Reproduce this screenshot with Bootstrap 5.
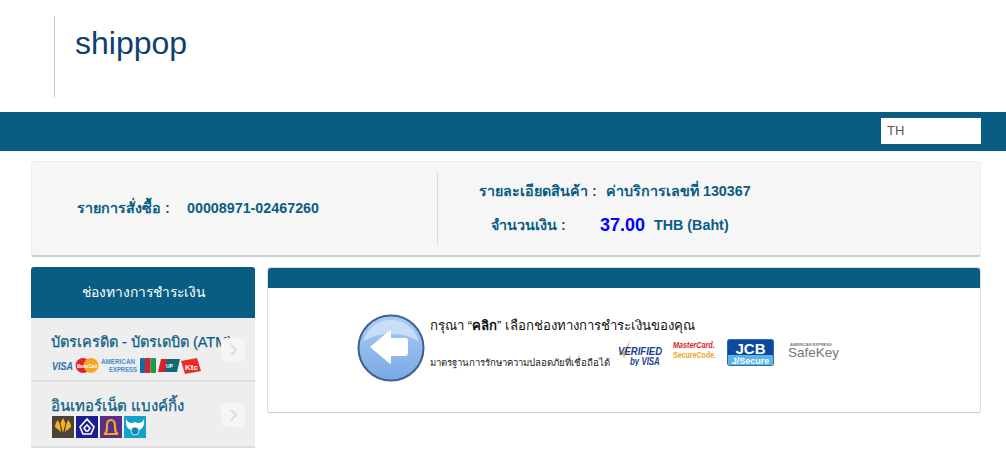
<!DOCTYPE html>
<html lang="en">
<head>
    <meta charset="UTF-8">
    <meta name="viewport" content="width=device-width, initial-scale=1.0">
    <title>shippop</title>
    <link href="https://cdn.jsdelivr.net/npm/bootstrap@5.3.0/dist/css/bootstrap.min.css" rel="stylesheet">
    <style>
        body { font-family: "Liberation Sans", Arial, sans-serif; color: #222; background: #fff; overflow: hidden; }
        .site-head { height: 112px; padding: 16px 0 0 54px; }
        .site-title { height: 81px; border-left: 1px solid #ccc; padding-left: 20px; font-size: 32px; line-height: 54px; color: #0e3f6e; margin: 0; font-weight: 400; }
        .lang-bar { height: 39px; background: #095d83; padding: 6px 25px 0 0; }
        .lang-pick { width: 100px; height: 26px; border: 0; border-radius: 0; padding: 0 6px; font-size: 13px; color: #555; background: #fff; box-shadow: none; }
        .page-wrap { padding: 10px 25px 0 31px; }
        .order-box { height: 96px; background: #f6f6f6; border: 1px solid #eee; border-bottom: 2px solid #ccc; border-radius: 3px; padding: 10px 0; margin-bottom: 10px; color: #095d83; font-weight: 700; font-size: 14.3px; }
        .order-left { width: 406px; padding-left: 45px; height: 74px; border-right: 1px solid #ddd; }
        .order-right { padding: 2px 0 0 41px; height: 74px; gap: 9px; }
        .order-label-a { width: 110px; }
        .order-label-b { width: 127px; }
        .order-label-c { width: 121px; padding-left: 12px; }
        .order-amount { color: #00f; font-size: 18px; width: 54px; }
        .pay-side { width: 224px; }
        .pay-head { height: 51px; background: #095d83; color: #fff; border-radius: 3px 3px 0 0; font-size: 13.8px; padding-top: 2px; }
        .pay-item { background: #eee; border-bottom: 2px solid #ddd; padding: 0 10px 0 20px; color: #095d83; position: relative; }
        .pay-item-a { height: 64px; padding-top: 15px; }
        .pay-item-b { height: 66px; padding-top: 14px; }
        .pay-name { font-size: 15px; line-height: 19px; white-space: nowrap; -webkit-text-stroke: .25px #095d83; }
        .pay-item-a .pay-name { font-size: 14.5px; }
        .pay-chevron { position: absolute; right: 10px; top: 20px; width: 24px; height: 24px; border-radius: 5px; background: #f5f5f5; }
        .pay-item-b .pay-chevron { top: 21px; }
        .pay-logos { display: flex; align-items: center; gap: 2px; }
        .pay-item-a .pay-logos { margin-top: 5px; }
        .pay-item-b .pay-logos { margin: 1px 0 0 1px; }
        .bank-logo { display: block; width: 22px; height: 22px; }
        .pay-main { width: 714px; height: 146px; margin-left: 12px; border: 1px solid #ddd; border-bottom-color: #ccc; border-radius: 3px; }
        .pay-main-top { height: 20px; background: #095d83; border-radius: 3px 3px 0 0; }
        .hint-row { padding: 26px 0 0 89px; }
        .hint-text { margin-left: 5px; width: 186px; }
        .hint-line { font-size: 13.2px; line-height: 18px; margin-top: 3px; color: #111; white-space: nowrap; }
        .hint-small { font-size: 9.6px; margin-top: 21px; color: #222; white-space: nowrap; }
        .hint-logos { margin: 25px 0 0 0; gap: 10px; }
        .logo-svg { display: block; }
    </style>
</head>
<body>
    <div class="site-head">
        <h1 class="site-title">shippop</h1>
    </div>
    <div class="lang-bar d-flex justify-content-end">
        <select class="form-select lang-pick"><option>TH</option></select>
    </div>
    <div class="page-wrap">
        <div class="order-box d-flex">
            <div class="order-left d-flex align-items-center">
                <div class="order-label-a">รายการสั่งซื้อ :</div>
                <div>00008971-02467260</div>
            </div>
            <div class="order-right d-flex flex-column justify-content-center">
                <div class="d-flex">
                    <div class="order-label-b">รายละเอียดสินค้า :</div>
                    <div>ค่าบริการเลขที่ 130367</div>
                </div>
                <div class="d-flex align-items-center">
                    <div class="order-label-c">จำนวนเงิน :</div>
                    <div class="order-amount">37.00</div>
                    <div>THB (Baht)</div>
                </div>
            </div>
        </div>
        <div class="d-flex align-items-start">
            <div class="pay-side">
                <div class="pay-head d-flex align-items-center justify-content-center">ช่องทางการชำระเงิน</div>
                <div class="pay-item pay-item-a">
                    <div class="pay-name">บัตรเครดิต - บัตรเดบิต (ATM)</div>
                    <div class="pay-logos">
                        <svg class="logo-svg" width="152" height="17" viewBox="0 0 152 17">
                            <text x="1" y="12.500" font-family="Liberation Sans" font-size="11" font-weight="700" font-style="italic" fill="#2a6ca5" textLength="21" lengthAdjust="spacingAndGlyphs">VISA</text>
                            <circle cx="32" cy="8.500" r="7.500" fill="#e0262c"/><circle cx="40" cy="8.500" r="7.500" fill="#f5a623"/>
                            <text x="26" y="10.500" font-family="Liberation Sans" font-size="4.500" font-weight="700" fill="#fff" textLength="20" lengthAdjust="spacingAndGlyphs">MasterCard</text>
                            <text x="50" y="7" font-family="Liberation Sans" font-size="7" font-weight="700" fill="#3f8fd0" textLength="34" lengthAdjust="spacingAndGlyphs">AMERICAN</text>
                            <text x="58" y="15" font-family="Liberation Sans" font-size="7" font-weight="700" fill="#3f8fd0" textLength="28" lengthAdjust="spacingAndGlyphs">EXPRESS</text>
                            <rect x="89" y="1" width="5" height="15" rx="1" fill="#0b6cb0"/><rect x="94" y="1" width="5.500" height="15" fill="#d8232a"/><rect x="99.500" y="1" width="5.500" height="15" rx="1" fill="#1a9a4a"/>
                            <path d="M110 2h8l-3 13h-8z" fill="#d1232b"/><path d="M116 2h13l-3 13h-12z" fill="#0c6b76"/>
                            <text x="115" y="11" font-family="Liberation Sans" font-size="5" font-weight="700" fill="#fff">UP</text>
                            <path d="M130 4l16-3 4 13-16 3z" fill="#ee2a24"/>
                            <text x="134" y="13" font-family="Liberation Sans" font-size="8" font-weight="700" fill="#fff">Ktc</text>
                        </svg>
                    </div>
                    <svg class="pay-chevron" viewBox="0 0 24 24"><path d="M10 7l5 5-5 5" fill="none" stroke="#ddd" stroke-width="2"/></svg>
                </div>
                <div class="pay-item pay-item-b">
                    <div class="pay-name">อินเทอร์เน็ต แบงค์กิ้ง</div>
                    <div class="pay-logos">
                        <svg class="bank-logo" viewBox="0 0 22 22"><rect width="22" height="22" fill="#4a433c"/><path d="M11 2l2.500 5L11 17 8.500 7zM6 4l2 5 1 7-6-5c0-3 1-5 3-7zM16 4l-2 5-1 7 6-5c0-3-1-5-3-7z" fill="#f5b31c"/></svg>
                        <svg class="bank-logo" viewBox="0 0 22 22"><rect width="22" height="22" fill="#1e1e93"/><path d="M11 3l7 8-3 7H7l-3-7zM11 9l-3 3 2 3h2l2-3z" fill="none" stroke="#fff" stroke-width="1.600"/></svg>
                        <svg class="bank-logo" viewBox="0 0 22 22"><rect width="22" height="22" fill="#58308c"/><path d="M4 18c3-1 3-4 3-8s1-6 4-6 4 2 4 6 0 7 3 8z" fill="none" stroke="#f2a81d" stroke-width="2.200"/></svg>
                        <svg class="bank-logo" viewBox="0 0 22 22"><rect width="22" height="22" fill="#12a3c8"/><path d="M2 3c2 4 5 5 9 3 4 2 7 1 9-3 1 7-2 10-5 11l-4-2-4 2C4 13 1 10 2 3z" fill="#fff"/><circle cx="11" cy="15" r="4" fill="#1c84a8" stroke="#bfe6f2"/></svg>
                    </div>
                    <svg class="pay-chevron" viewBox="0 0 24 24"><path d="M10 7l5 5-5 5" fill="none" stroke="#ddd" stroke-width="2"/></svg>
                </div>
            </div>
            <div class="pay-main">
                <div class="pay-main-top"></div>
                <div class="hint-row d-flex">
                    <svg class="logo-svg" width="68" height="68" viewBox="0 0 68 68">
                        <defs>
                            <linearGradient id="ballFill" x1="0" y1="0" x2="0" y2="1"><stop offset="0" stop-color="#a8cdf3"/><stop offset="1" stop-color="#7aa9e6"/></linearGradient>
                        </defs>
                        <circle cx="34" cy="34" r="32.500" fill="url(#ballFill)" stroke="#3f5f8f" stroke-width="2"/>
                        <path d="M6 28C10 13 22 6 34 6s24 7 28 22C48 17 20 17 6 28z" fill="#d8e8fa" opacity=".7"/>
                        <path d="M13 33l19-16c1-1 2-1 2 1v6h14c2 0 3 1 3 3v12c0 2-1 3-3 3H34v6c0 2-1 2-2 1z" fill="#fff"/>
                    </svg>
                    <div class="hint-text">
                        <div class="hint-line">กรุณา “<b>คลิก</b>” เลือกช่องทางการชำระเงินของคุณ</div>
                        <div class="hint-small">มาตรฐานการรักษาความปลอดภัยที่เชื่อถือได้</div>
                    </div>
                    <div class="hint-logos d-flex align-items-start">
                        <svg class="logo-svg" width="47" height="27" viewBox="0 0 47 27">
                            <path d="M3 6l4 8 8-14-7 19z" fill="#f0a820"/>
                            <text transform="translate(2 16) scale(.87 1)" font-family="Liberation Sans" font-size="11" font-weight="700" font-style="italic" fill="#1a3f8c">VERIFIED</text>
                            <text transform="translate(14 26) scale(.79 1)" font-family="Liberation Sans" font-size="10" font-weight="700" font-style="italic" fill="#1a3f8c">by VISA</text>
                        </svg>
                        <svg class="logo-svg" width="44" height="22" viewBox="0 0 44 22">
                            <text transform="translate(0 9) scale(.85 1)" font-family="Liberation Sans" font-size="8.500" font-weight="700" font-style="italic" fill="#d8232a">MasterCard.</text>
                            <text transform="translate(0 19) scale(.83 1)" font-family="Liberation Sans" font-size="8.500" font-weight="700" fill="#f5a01e">SecureCode.</text>
                        </svg>
                        <svg class="logo-svg" width="47" height="27" viewBox="0 0 47 27">
                            <rect x=".5" y=".5" width="46" height="26" rx="2" fill="#0d4a9e" stroke="#2a6fb8"/>
                            <rect x="1" y="16" width="45" height="10" fill="#5ab4e6"/>
                            <text x="23.500" y="14.500" text-anchor="middle" font-family="Liberation Sans" font-size="15" font-weight="700" fill="#fff">JCB</text>
                            <text x="23.500" y="24.500" text-anchor="middle" font-family="Liberation Sans" font-size="9" font-weight="700" fill="#fff">J/Secure</text>
                        </svg>
                        <svg class="logo-svg" width="58" height="22" viewBox="0 0 58 22">
                            <text x="6" y="7" font-family="Liberation Sans" font-size="4" font-weight="700" fill="#777">AMERICAN EXPRESS</text>
                            <text transform="translate(4 18) scale(1.040 1)" font-family="Liberation Sans" font-size="13" fill="#777">SafeKey</text>
                        </svg>
                    </div>
                </div>
            </div>
        </div>
    </div>
    <script src="https://cdn.jsdelivr.net/npm/bootstrap@5.3.0/dist/js/bootstrap.bundle.min.js"></script>
</body>
</html>
